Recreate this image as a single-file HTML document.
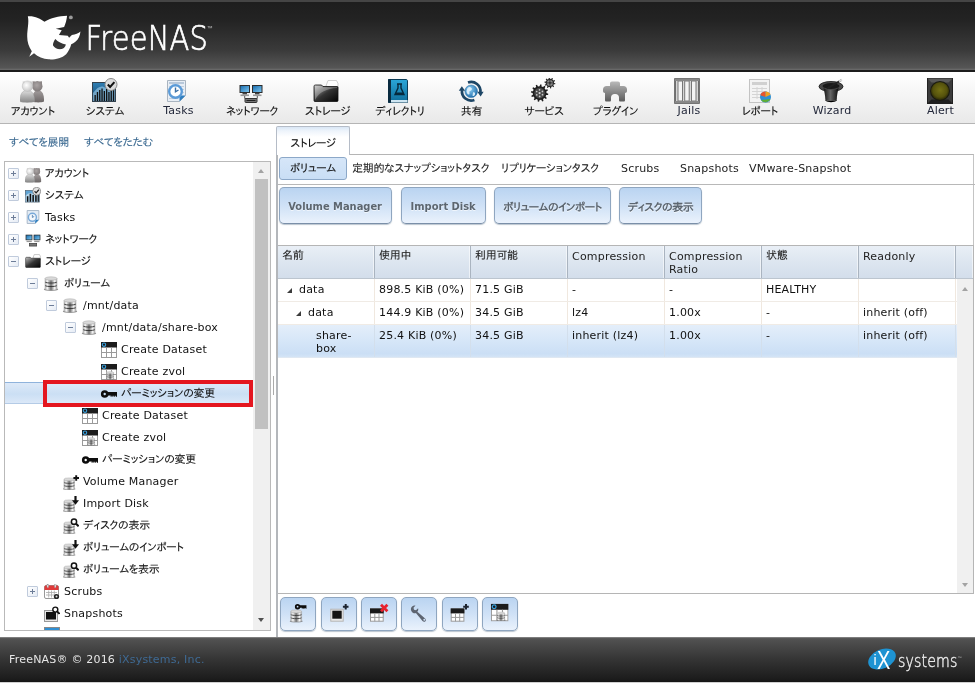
<!DOCTYPE html>
<html lang="ja">
<head>
<meta charset="utf-8">
<title>FreeNAS</title>
<style>
*{box-sizing:border-box;margin:0;padding:0}
html,body{width:975px;height:683px;overflow:hidden;background:#fff}
body{position:relative;font-family:"DejaVu Sans","Liberation Sans","IPAPGothic","IPAGothic","Noto Sans CJK JP",sans-serif;font-size:11px;color:#111;letter-spacing:.2px}
.j{font-family:"Liberation Sans","IPAPGothic","IPAGothic","Noto Sans CJK JP",sans-serif;font-size:11px;letter-spacing:-0.3px;-webkit-text-stroke:.1px currentColor}
.abs{position:absolute}
#header{position:absolute;left:0;top:0;width:975px;height:71.500px;background:linear-gradient(#454545 0,#454545 1.500px,#1e1e1e 2.500px,#232323 20px,#3a3a3a 50px,#565656 68px,#686868 69.500px,#1c1c1c 70px,#1c1c1c 71.500px)}
#menubar{position:absolute;left:0;top:71.500px;width:975px;height:52.500px;background:linear-gradient(#ffffff,#f6f6f6 40%,#e9e9e9);border-bottom:1px solid #b5b5b5}
.mi{position:absolute;top:0;height:51px;width:90px;text-align:center}
.mi .ic{position:absolute;left:50%;top:6.500px;width:26px;height:26px;margin-left:-13px}
.mi .lb{position:absolute;left:0;right:0;top:32.500px;line-height:14px;white-space:nowrap;color:#111}
#footer{position:absolute;left:0;top:637px;width:975px;height:46px;background:linear-gradient(#a0a0a0 0,#5a5a5a 1px,#505050 3px,#353535 22px,#1c1c1c 42px,#141414 45px,#d0d0d0 45.5px)}
#footer .cp{position:absolute;left:9px;top:16px;color:#e6e6e6;font-size:11px;line-height:14px;white-space:nowrap}
#footer .cp a{color:#3f6a94;text-decoration:none}

#left{position:absolute;left:0;top:124px;width:276px;height:513px;background:#fff}
.lnk{position:absolute;top:11px;line-height:14px;color:#3d6b92;white-space:nowrap}
#tree{position:absolute;left:4px;top:37px;width:267px;height:470px;border:1px solid #b9b9b9;overflow:hidden;background:#fff}
.tr{position:absolute;left:0;width:249px;height:22px}
.tr.sel{background:linear-gradient(#dde9f8,#cbdff4 55%,#dbe8f8);border-top:1px solid #8fb3dc;border-bottom:1px solid #b4cbe6}
.tr.sel>*{margin-top:-1px}
.ex{position:absolute;margin-left:-1px;width:11px;height:11px;border:1px solid #c0cbdc;background:linear-gradient(135deg,#fff,#e6ecf5);border-radius:1px}
.ex .h{position:absolute;left:2px;top:4px;width:5px;height:1px;background:#6d7d98}
.ex .v{position:absolute;left:4px;top:2px;width:1px;height:5px;background:#6d7d98}
.ti{position:absolute}
.tx{position:absolute;top:5px;line-height:14px;white-space:nowrap;color:#111}
#tsb{position:absolute;left:248px;top:0;width:17px;height:468px;background:#f0f0f0}
#tsb .th{position:absolute;left:2px;top:17px;width:13px;height:250px;background:#c1c1c1}
#tsb .up{position:absolute;left:5px;top:7px;border:3.500px solid transparent;border-top:0;border-bottom:4px solid #a3a3a3}
#tsb .dn{position:absolute;left:5px;top:456px;border:3.500px solid transparent;border-bottom:0;border-top:4px solid #505050}
#redbox{position:absolute;left:43px;top:256px;width:210px;height:27px;border:4px solid #e4161f}

#split{position:absolute;left:271px;top:124px;width:5px;height:513px;background:#fff}
#right{position:absolute;left:276px;top:124px;width:699px;height:513px}
#tab{position:absolute;left:0;top:2px;width:74px;height:29px;border:1px solid #b5bcc7;border-bottom:0;background:linear-gradient(#d9e6f5,#eef4fb 4px,#fff 10px);z-index:2;text-align:center;line-height:14px;padding-top:9px;border-radius:2px 2px 0 0}
#pane{position:absolute;left:0;top:30px;width:698px;height:483px;border:1px solid #b5b5b5;border-left:2px solid #b4b7bb;border-right:1px solid #c4c4c4;border-bottom:0;background:#fff}
#subsel{position:absolute;left:3px;top:33px;width:68px;height:23px;border:1px solid #8ca8c8;border-radius:3px;background:linear-gradient(#d6e6f8,#c9def5);text-align:center;line-height:14px;padding-top:3px;z-index:3}
.st{position:absolute;top:38px;line-height:14px;white-space:nowrap;color:#222;z-index:3}
#sep1{position:absolute;left:2px;top:60px;width:697px;height:1px;background:#b8b8b8;z-index:3}
.btn{position:absolute;top:63px;height:37px;border:1px solid #8fa6c0;border-bottom-color:#7a8fa8;border-radius:5px;background:linear-gradient(#bad4f1,#cfe1f6 50%,#eaf2fc);z-index:3;text-align:center;font-weight:bold;color:#5c6670;line-height:14px;padding-top:12px;white-space:nowrap;box-shadow:0 1px 1px rgba(120,140,160,.5);text-shadow:0 1px 0 rgba(255,255,255,.6)}
.btn span{display:inline-block;letter-spacing:0;transform:scaleX(.9)}
.btn span.jb{transform:none;letter-spacing:-.5px}
.jb{font-family:"Liberation Sans","IPAPGothic","IPAGothic","Noto Sans CJK JP",sans-serif;letter-spacing:-.4px;font-weight:bold}
#grid{position:absolute;left:2px;top:121px;width:696px;height:349px;border:1px solid #b5b5b5;border-left:0;z-index:3;background:#fff;overflow:hidden}
#ghead{position:absolute;left:0;top:0;width:696px;height:33px;background:linear-gradient(#e9eff6,#dde6f0 50%,#d3deeb);border-bottom:1px solid #bcc5cf}
.hc{position:absolute;top:0;height:32px;padding:4px 0 0 4px;line-height:13px;border-right:1px solid #aab4c0;box-shadow:inset -1px 0 0 rgba(255,255,255,.55);color:#222;white-space:nowrap}
.gr{position:absolute;left:0;width:679px;border-bottom:1px solid #f0ebe5;background:#fff}
.gsel{background:linear-gradient(#e4eefa,#d6e6f8 50%,#cbdff5 90%,#d4e4f6);border-bottom-color:#dfe8f2}
.gsel .gc{border-right-color:#d3dfec}
.hc.j{padding-top:3px}
.st.j{top:36.500px}
.gc{position:absolute;top:0;bottom:0;padding:4px 0 0 4px;line-height:13px;border-right:1px solid #f0e8df;white-space:nowrap;color:#111}
.arr{position:absolute;top:9px;width:0;height:0;border-left:5px solid transparent;border-bottom:5px solid #3c3c3c}
#gsb{position:absolute;left:679px;top:33px;width:18px;height:315px;background:#f0f0f0}
#gsb .up{position:absolute;left:5px;top:8px;border:3.500px solid transparent;border-top:0;border-bottom:4px solid #a3a3a3}
#gsb .dn{position:absolute;left:5px;top:304px;border:3.500px solid transparent;border-bottom:0;border-top:4px solid #a3a3a3}
#tb{position:absolute;left:2px;top:470px;width:697px;height:43px;background:#fff;z-index:3}
.ib{position:absolute;top:3px;width:36px;height:34px;border:1px solid #8fa6c0;border-radius:5px;background:linear-gradient(#bad4f1,#cfe1f6 50%,#eaf2fc);box-shadow:0 1px 1px rgba(120,140,160,.5)}
.ib svg{position:absolute;left:7px;top:5px}
#grip{position:absolute;left:273px;top:376px;width:1px;height:19px;background:#aaa}
#app{position:absolute;left:0;top:0;width:975px;height:683px;will-change:transform}
.tx.j{top:4px}
</style>
</head>
<body>
<div id="app">
<svg width="0" height="0" style="position:absolute">
<defs>
<linearGradient id="gGray" x1="0" y1="0" x2="0" y2="1"><stop offset="0" stop-color="#e4e4e4"/><stop offset="1" stop-color="#7d7d7d"/></linearGradient>
<linearGradient id="gGray2" x1="0" y1="0" x2="0" y2="1"><stop offset="0" stop-color="#c9c9c9"/><stop offset="1" stop-color="#6a6a6a"/></linearGradient>
<linearGradient id="gBlue" x1="0" y1="0" x2="0" y2="1"><stop offset="0" stop-color="#2f7fb4"/><stop offset="1" stop-color="#15456b"/></linearGradient>
<linearGradient id="gScreen" x1="0" y1="0" x2="1" y2="1"><stop offset="0" stop-color="#1b6fb0"/><stop offset="1" stop-color="#7cc4ee"/></linearGradient>
<linearGradient id="gFolder" x1="0" y1="0" x2="1" y2="1"><stop offset="0" stop-color="#c4c4c4"/><stop offset="0.5" stop-color="#333"/><stop offset="1" stop-color="#030303"/></linearGradient>
<linearGradient id="gBook" x1="0" y1="0" x2="0" y2="1"><stop offset="0" stop-color="#2aa6d8"/><stop offset="1" stop-color="#0f6c99"/></linearGradient>
<linearGradient id="gPlug" x1="0" y1="0" x2="0" y2="1"><stop offset="0" stop-color="#b9b9b9"/><stop offset="1" stop-color="#5c5c5c"/></linearGradient>
<radialGradient id="gAlert" cx="0.5" cy="0.45" r="0.55"><stop offset="0" stop-color="#747014"/><stop offset="0.7" stop-color="#55520c"/><stop offset="1" stop-color="#2a2807"/></radialGradient>
<radialGradient id="gGlobe" cx="0.4" cy="0.35" r="0.7"><stop offset="0" stop-color="#8fd0f5"/><stop offset="1" stop-color="#1b6aa8"/></radialGradient>
<linearGradient id="gHat" x1="0" y1="0" x2="1" y2="0"><stop offset="0" stop-color="#111"/><stop offset="0.45" stop-color="#666"/><stop offset="1" stop-color="#0a0a0a"/></linearGradient>
<linearGradient id="gBtn" x1="0" y1="0" x2="0" y2="1"><stop offset="0" stop-color="#e6f0fb"/><stop offset="1" stop-color="#bcd5f0"/></linearGradient>
</defs></svg>
<div id="header">
<svg class="abs" style="left:20px;top:8px" width="90" height="60" viewBox="0 0 975 650">
<path fill="#fff" d="M85,90 C160,85 220,115 265,150 C330,110 420,88 510,85 C505,130 495,170 478,205 L388,226 L452,240 C440,258 430,275 422,292 L518,300 L532,322 L562,292 C600,290 635,275 655,255 C650,300 635,340 600,365 C585,378 570,385 555,392 C545,430 525,470 500,500 C450,545 380,560 310,556 C250,552 195,530 152,490 L100,528 L128,468 C95,420 78,370 78,310 C78,230 100,160 85,90 Z M382,335 C365,360 355,385 358,405 C375,435 410,450 450,445 C475,440 490,420 497,395 C455,385 410,365 382,335 Z" fill-rule="evenodd"/>
<circle cx="551" cy="102" r="21" fill="#9a9a9a"/>
</svg>
<svg class="abs" style="left:80px;top:10px" width="140" height="50" viewBox="0 0 140 50">
<text x="5.5" y="39.5" font-family="'DejaVu Sans','Liberation Sans',sans-serif" font-weight="200" font-size="34.5" fill="#fff" stroke="#fff" stroke-width="0.7" textLength="122.5" lengthAdjust="spacingAndGlyphs">FreeNAS</text>
<text x="126.5" y="19.5" font-family="'Liberation Sans',sans-serif" font-size="6" fill="#bbb">™</text>
</svg>
</div>
<div id="menubar">
<div class="mi" style="left:-12px"><svg class="ic" viewBox="0 0 26 26"><use href="#s-acct" width="26" height="26"/></svg><div class="lb j">アカウント</div></div>
<div class="mi" style="left:60px"><svg class="ic" viewBox="0 0 26 26"><rect x="0.500" y="4.500" width="23" height="19" fill="url(#gBlue)" stroke="#33424f"/><path d="M1 15 C6 8 10 7 14 10 S20 9 23 6 V23 H1z" fill="#a9d3ee" opacity=".6"/><g fill="#111"><rect x="2.500" y="17" width="1.300" height="6"/><rect x="4.800" y="14" width="1.300" height="9"/><rect x="7.100" y="12" width="1.300" height="11"/><rect x="9.400" y="10.500" width="1.300" height="12.500"/><rect x="11.700" y="13" width="1.300" height="10"/><rect x="14" y="11" width="1.300" height="12"/><rect x="16.300" y="14" width="1.300" height="9"/><rect x="18.600" y="12" width="1.300" height="11"/><rect x="20.900" y="9" width="1.300" height="14"/></g><circle cx="19" cy="6.500" r="6" fill="#dcdcdc" stroke="#8a8a8a"/><path d="M15.800 6.500l2.300 2.500 4.300-4.800" fill="none" stroke="#111" stroke-width="2"/></svg><div class="lb j">システム</div></div>
<div class="mi" style="left:132px"><svg class="ic" viewBox="0 0 26 26"><path d="M3.500 2.500h18v15l-6 6h-12z" fill="#e8eef5" stroke="#a9b4c0"/><rect x="5" y="4" width="15" height="2" fill="#b8c8da"/><g stroke="#c2cfdd" stroke-width="1"><path d="M5 8.500h15M5 11.500h15M5 14.500h15M5 17.500h12M5 20.500h9"/></g><path d="M21.500 17.500l-6 6v-6z" fill="#2f7fc0"/><circle cx="11.500" cy="13.500" r="6.300" fill="#fff" stroke="#5b9bd8" stroke-width="2.400"/><path d="M11.500 9.500v4.300l3-1.800" fill="none" stroke="#3a6fa4" stroke-width="1.400"/></svg><div class="lb" style="color:#23283a;left:3px">Tasks</div></div>
<div class="mi" style="left:206px"><svg class="ic" viewBox="0 0 26 26"><g><rect x="1.500" y="7" width="10.500" height="8" fill="#2c2c2c"/><rect x="2.500" y="8" width="8.500" height="6" fill="url(#gScreen)"/><rect x="4.500" y="15" width="4.500" height="1.500" fill="#444"/><rect x="2.500" y="16.500" width="8.500" height="1.600" fill="#999"/><rect x="14" y="7" width="10.500" height="8" fill="#2c2c2c"/><rect x="15" y="8" width="8.500" height="6" fill="url(#gScreen)"/><rect x="17" y="15" width="4.500" height="1.500" fill="#444"/><rect x="15" y="16.500" width="8.500" height="1.600" fill="#999"/><path d="M6.700 18v2.500h12.600v-2.500" fill="none" stroke="#555" stroke-width="1"/><rect x="7" y="20.500" width="12" height="4" rx="0.800" fill="#777" stroke="#333"/><rect x="8.500" y="22" width="9" height="1" fill="#222"/></g></svg><div class="lb j" style="left:2px">ネットワーク</div></div>
<div class="mi" style="left:281px"><svg class="ic" viewBox="0 0 26 26"><path d="M13 8l2-5.500h8.500l1.500 3v6z" fill="#fdfdfd" stroke="#bbb" stroke-width=".7"/><path d="M1 8.500c0-1 .5-1.500 1.500-1.500h6l1.500 1.500h14c.8 0 1 .5 1 1v13c0 .8-.5 1-1 1h-22c-.7 0-1-.4-1-1z" fill="url(#gFolder)" stroke="#111" stroke-width=".8"/><path d="M2 22c4-8 12-11.500 22-12v-.8h-14.300l-1.500-1.500h-6.200z" fill="#fff" opacity=".28"/></svg><div class="lb j" style="left:3px">ストレージ</div></div>
<div class="mi" style="left:353px"><svg class="ic" viewBox="0 0 26 26"><path d="M3.500 1.500h17.500c1 0 1.500.5 1.500 1.500v21.500h-19z" fill="url(#gBook)" stroke="#0b3c57"/><rect x="3" y="1.500" width="3" height="23" fill="#0a2b40"/><rect x="6" y="22" width="16.500" height="2.500" fill="#cfe6f2"/><path d="M12 6h5M13 6v4l-3 6.500h9l-3-6.500v-4" fill="none" stroke="#06293d" stroke-width="1.400"/><path d="M11.200 14.500h6.600l1 2h-8.600z" fill="#06293d"/></svg><div class="lb j" style="left:4px">ディレクトリ</div></div>
<div class="mi" style="left:426px"><svg class="ic" viewBox="0 0 26 26"><circle cx="13.200" cy="13.300" r="6.300" fill="url(#gGlobe)" stroke="#2b6ea3" stroke-width=".5"/><path d="M9.500 10c1.500-1.500 3-1 4 0s0 2.500-1.500 3 .5 3-1 3.500-2.500-2-2.500-3.500zM15 14.500c1.500-.5 2.500.5 2 2s-2 2-2.500 1z" fill="#e6f5fe" opacity=".9"/><path d="M10 4.560A9.300 9.300 0 0 1 22.400 14.500" fill="none" stroke="#1d4666" stroke-width="2.700"/><path d="M19.300 13.800h6.300l-3 4.600z" fill="#1d4666"/><path d="M16.400 22.040A9.300 9.300 0 0 1 4 12.100" fill="none" stroke="#1d4666" stroke-width="2.700"/><path d="M.8 12.800h6.300l-3.300-4.600z" fill="#1d4666"/></svg><div class="lb j" style="left:1px">共有</div></div>
<div class="mi" style="left:498px"><svg class="ic" viewBox="0 0 26 26"><path d="M16.50 15.10L18.28 15.65L18.09 17.00L16.23 17.03L15.58 18.55L16.85 19.91L16.00 20.99L14.38 20.08L13.05 21.08L13.47 22.89L12.20 23.40L11.25 21.80L9.60 22.00L9.05 23.78L7.70 23.59L7.67 21.73L6.15 21.08L4.79 22.35L3.71 21.50L4.62 19.88L3.62 18.55L1.81 18.97L1.30 17.70L2.90 16.75L2.70 15.10L0.92 14.55L1.11 13.20L2.97 13.17L3.62 11.65L2.35 10.29L3.20 9.21L4.82 10.12L6.15 9.12L5.73 7.31L7.00 6.80L7.95 8.40L9.60 8.20L10.15 6.42L11.50 6.61L11.53 8.47L13.05 9.12L14.41 7.85L15.49 8.70L14.58 10.32L15.58 11.65L17.39 11.23L17.90 12.50L16.30 13.45z" fill="#1f1f1f"/><circle cx="9.600" cy="15.100" r="5.300" fill="#4a4a4a"/><circle cx="12.50" cy="16.68" r=".85" fill="#c9c9c9"/><circle cx="9.68" cy="18.40" r=".85" fill="#c9c9c9"/><circle cx="6.78" cy="16.82" r=".85" fill="#c9c9c9"/><circle cx="6.70" cy="13.52" r=".85" fill="#c9c9c9"/><circle cx="9.52" cy="11.80" r=".85" fill="#c9c9c9"/><circle cx="12.42" cy="13.38" r=".85" fill="#c9c9c9"/><circle cx="9.600" cy="15.100" r="1.100" fill="#d8d8d8"/><path d="M24.10 4.90L25.38 5.31L25.21 6.33L23.86 6.30L23.30 7.37L24.09 8.46L23.35 9.18L22.28 8.36L21.20 8.89L21.20 10.24L20.18 10.39L19.79 9.10L18.60 8.89L17.81 9.99L16.89 9.51L17.35 8.23L16.50 7.37L15.22 7.79L14.76 6.86L15.87 6.10L15.70 4.90L14.42 4.49L14.59 3.47L15.94 3.50L16.50 2.43L15.71 1.34L16.45 0.62L17.52 1.44L18.60 0.91L18.60 -0.44L19.62 -0.59L20.01 0.70L21.20 0.91L21.99 -0.19L22.91 0.29L22.45 1.57L23.30 2.43L24.58 2.01L25.04 2.94L23.93 3.70z" fill="#2a2a2a"/><circle cx="19.900" cy="4.900" r="3" fill="#8c8c8c"/><path d="M19.900 2v5.800M17 4.900h5.800" stroke="#2a2a2a" stroke-width=".9"/><circle cx="19.900" cy="4.900" r=".8" fill="#2a2a2a"/></svg><div class="lb j" style="left:2px">サービス</div></div>
<div class="mi" style="left:570px"><svg class="ic" viewBox="0 0 26 26"><path d="M8 5.500c0-1.200.8-2 2-2h6c1.200 0 2 .8 2 2v2.500h3.500c2 0 3.500 1.500 3.500 3.500v1.500c0 1.200-.8 2-2 2v7c0 1-.5 1.500-1.500 1.500h-3c-1 0-1.500-.5-1.500-1.500v-2.500c0-2-1.500-3.500-3.500-3.500h-1c-2 0-3.500 1.500-3.500 3.500v2.500c0 1-.5 1.500-1.500 1.500h-3c-1 0-1.500-.5-1.500-1.500v-7c-1.200 0-2-.8-2-2v-1.500c0-2 1.500-3.500 3.500-3.500h3.500z" fill="url(#gPlug)"/></svg><div class="lb j" style="left:1px">プラグイン</div></div>
<div class="mi" style="left:642px"><svg class="ic" viewBox="0 0 26 26"><rect x="1" y="1" width="24" height="24" fill="#d6d6d6" stroke="#555" stroke-width="1.600"/><g fill="#f4f4f4" stroke="#777" stroke-width="1"><rect x="4" y="3" width="4.500" height="20"/><rect x="10.700" y="3" width="4.500" height="20"/><rect x="17.500" y="3" width="4.500" height="20"/></g><rect x="1" y="1" width="24" height="2" fill="#888"/><rect x="1" y="23" width="24" height="2" fill="#888"/></svg><div class="lb" style="color:#23283a;left:4px">Jails</div></div>
<div class="mi" style="left:715px"><svg class="ic" viewBox="0 0 26 26"><rect x="2.500" y="1.500" width="20" height="23" fill="#f3f3f3" stroke="#c3c3c3"/><rect x="5" y="4" width="15" height="3" fill="#d0d0d0"/><g stroke="#d4d4d4" stroke-width="1"><path d="M5 10.500h15M5 13.500h15M5 16.500h15M5 19.500h15M10 9v12M15 9v12"/></g><circle cx="18.500" cy="19" r="5.500" fill="#2f8fd3"/><path d="M18.500 19l-5.200-1.800a5.500 5.500 0 0 1 5.200-3.700z" fill="#e8542b"/><path d="M18.500 19v-5.500a5.500 5.500 0 0 1 5 3.200z" fill="#f2a11f"/><path d="M14 22a5.500 5.500 0 0 0 9.500-1z" fill="#5fae36"/></svg><div class="lb j">レポート</div></div>
<div class="mi" style="left:786px"><svg class="ic" viewBox="0 0 26 26"><ellipse cx="13" cy="8.500" rx="12" ry="5" fill="#4a4a4a" stroke="#111" stroke-width=".8"/><ellipse cx="13" cy="8" rx="8.500" ry="3" fill="#1a1a1a"/><path d="M5.500 10c1 4 1.800 8 1.800 11.500 2 2 9.500 2 11.500 0 0-3.500.8-7.500 1.800-11.500-3 2.500-12 2.500-15.100 0z" fill="url(#gHat)"/><path d="M7.300 21.500c2 2 9.500 2 11.500 0v1c-2 2.200-9.500 2.200-11.500 0z" fill="#000"/><path d="M9 10.500L23.500 2" stroke="#222" stroke-width="2"/><path d="M21 3.500l3-1.800" stroke="#ddd" stroke-width="2"/></svg><div class="lb" style="color:#23283a;left:2px">Wizard</div></div>
<div class="mi" style="left:895px"><svg class="ic" viewBox="0 0 26 26"><rect x=".5" y=".5" width="25" height="25" fill="#3b3b3b" stroke="#222"/><path d="M.5 .5h25l-4 4h-17z" fill="#5a5a5a"/><path d="M.5 25.500h25l-4-4h-17z" fill="#1f1f1f"/><circle cx="13" cy="13" r="10" fill="#1a1a10"/><circle cx="13" cy="13" r="9" fill="url(#gAlert)"/></svg><div class="lb" style="color:#23283a;left:1px">Alert</div></div>
</div>
<svg width="0" height="0" style="position:absolute"><defs>
<linearGradient id="gCyl" x1="0" y1="0" x2="1" y2="0"><stop offset="0" stop-color="#b4b4b4"/><stop offset="0.2" stop-color="#f6f6f6"/><stop offset="0.5" stop-color="#6f6f6f"/><stop offset="0.8" stop-color="#f6f6f6"/><stop offset="1" stop-color="#acacac"/></linearGradient>
<symbol id="s-db" viewBox="0 0 16 16"><ellipse cx="8" cy="14.400" rx="7.200" ry="1.500" fill="#6e6e6e" opacity=".75"/><path d="M2 3.500v10.300c0 1.600 12 1.600 12 0v-10.300z" fill="url(#gCyl)"/><path d="M2 7c1.500 1.400 10.500 1.400 12 0M2 10.500c1.500 1.400 10.500 1.400 12 0" stroke="#2e2e2e" stroke-width=".9" fill="none"/><path d="M2 3.500v10.300M14 3.500v10.300" stroke="#a0a0a0" stroke-width=".5"/><ellipse cx="8" cy="3.500" rx="6" ry="1.700" fill="#d9d9d9" stroke="#a6a6a6" stroke-width=".5"/></symbol>
<symbol id="s-dbs" viewBox="0 0 16 16"><g transform="translate(-.8 2.300) scale(.875)"><use href="#s-db" width="16" height="16"/></g></symbol>
<symbol id="s-tbl" viewBox="0 0 16 16"><rect x=".5" y=".5" width="15" height="15" fill="#fff" stroke="#9a9a9a"/><rect x="0" y="0" width="16" height="5.500" fill="#1c1c1c"/><circle cx="3" cy="2.700" r="1.700" fill="#1c1c1c" stroke="#39a0dc" stroke-width="1.100"/><path d="M.5 10.500h15M5.500 5.500v10M10.500 5.500v10" stroke="#9a9a9a" fill="none"/></symbol>
<symbol id="s-zvol" viewBox="0 0 16 16"><use href="#s-tbl" width="16" height="16"/><g transform="translate(4.500 6.500) scale(.58)"><use href="#s-db" width="16" height="16"/></g></symbol>
<symbol id="s-key" viewBox="0 0 20 16"><path fill="#0d0d0d" fill-rule="evenodd" d="M4.700 5.200a3.800 3.800 0 1 0 0 7.600a3.800 3.800 0 0 0 0-7.600zM4.700 7.800a1.200 1.200 0 1 1 0 2.400a1.200 1.200 0 0 1 0-2.400z"/><path fill="#0d0d0d" d="M7.500 7h9.500v4.800h-1v-1h-.8v1h-1v-1h-.8v1h-1v-1h-.8v1h-1v-1.300h-3.100z"/></symbol>
<radialGradient id="gHeadL" cx=".4" cy=".4" r=".7"><stop offset="0" stop-color="#fff"/><stop offset="1" stop-color="#bdbdbd"/></radialGradient>
<radialGradient id="gHeadR" cx=".45" cy=".4" r=".7"><stop offset="0" stop-color="#aaa4a4"/><stop offset="1" stop-color="#7a7474"/></radialGradient>
<linearGradient id="gBodL" x1="0" y1="0" x2="0" y2="1"><stop offset="0" stop-color="#dedede"/><stop offset="1" stop-color="#858585"/></linearGradient>
<linearGradient id="gBodR" x1="0" y1="0" x2="0" y2="1"><stop offset="0" stop-color="#a39d9d"/><stop offset="1" stop-color="#6b6666"/></linearGradient>
<symbol id="s-acct" viewBox="0 0 26 26"><path d="M12.500 23.600c-.3-7 1.200-11.300 5.500-11.300s6.300 4.300 6 11.300c-3 1.200-8.500 1.200-11.500 0z" fill="url(#gBodR)"/><path d="M12.500 3.200l2.500.3v3h-2.500zM22 3.200l-2.500.3v3h2.500z" fill="#8d8787"/><circle cx="17.300" cy="8.200" r="5.200" fill="url(#gHeadR)"/><path d="M0 23.600c-.3-7 2-11.300 7.200-11.300s7.600 4.300 7.300 11.300c-3 1.200-11.600 1.200-14.500 0z" fill="url(#gBodL)" stroke="#9a9a9a" stroke-width=".4"/><path d="M2.700 3.200l2.500.3v3h-2.500zM12.300 3.200l-2.500.3v3h2.500z" fill="#d6d6d6"/><circle cx="7.500" cy="8.200" r="5.300" fill="url(#gHeadL)" stroke="#b0b0b0" stroke-width=".4"/></symbol>
</defs></svg>
<div id="left">
<div class="lnk j" style="left:9px">すべてを展開</div><div class="lnk j" style="left:84px">すべてをたたむ</div>
<div id="tree">
<div class="tr" style="top:0px"><span class="ex" style="left:4px;top:6px"><i class="h"></i><i class="v"></i></span><svg class="ti" style="left:20px;top:4px" width="18" height="18"><use href="#s-acct" width="17.500" height="17.500"/></svg><span class="tx j" style="left:40px">アカウント</span></div>
<div class="tr" style="top:22px"><span class="ex" style="left:4px;top:6px"><i class="h"></i><i class="v"></i></span><svg class="ti" style="left:20px;top:3px" width="16" height="16" viewBox="0 0 26 26"><rect x=".5" y="5.500" width="23" height="19" fill="#5fa3d3" stroke="#4a5a68"/><path d="M1 14c5-5 9-5 12-3s7 0 10-3v16h-22z" fill="#d6e8f5" opacity=".7"/><g fill="#111"><rect x="3" y="15" width="2.500" height="9"/><rect x="7.500" y="11" width="2.500" height="13"/><rect x="12" y="13" width="2.500" height="11"/><rect x="16.500" y="12" width="2.500" height="12"/><rect x="20.500" y="10" width="2" height="14"/></g><circle cx="19" cy="7" r="6.500" fill="#e4e4e4" stroke="#777" stroke-width="1.200"/><path d="M15.500 7l2.500 2.500 4.500-5" fill="none" stroke="#222" stroke-width="2"/></svg><span class="tx j" style="left:40px">システム</span></div>
<div class="tr" style="top:44px"><span class="ex" style="left:4px;top:6px"><i class="h"></i><i class="v"></i></span><svg class="ti" style="left:20px;top:3px" width="16" height="16" viewBox="0 0 26 26"><path d="M3.500 2.500h19v15l-6 6h-13z" fill="#e4ecf5" stroke="#9fb0c3" stroke-width="1.400"/><path d="M22.500 17.500l-6 6v-6z" fill="#2f7fc0"/><circle cx="12" cy="13.500" r="6.500" fill="#f4f8fc" stroke="#79a9d8" stroke-width="2.400"/><path d="M12 9.500v4.300l3-1.800" fill="none" stroke="#5a86b4" stroke-width="1.500"/></svg><span class="tx" style="left:40px">Tasks</span></div>
<div class="tr" style="top:66px"><span class="ex" style="left:4px;top:6px"><i class="h"></i><i class="v"></i></span><svg class="ti" style="left:20px;top:3px" width="16" height="16" viewBox="0 0 26 26"><rect x="1" y="6" width="11" height="9" fill="#2c2c2c"/><rect x="2.200" y="7.200" width="8.600" height="6.600" fill="url(#gScreen)"/><rect x="14" y="6" width="11" height="9" fill="#2c2c2c"/><rect x="15.200" y="7.200" width="8.600" height="6.600" fill="url(#gScreen)"/><rect x="2.500" y="16" width="8.500" height="2" fill="#999"/><rect x="15" y="16" width="8.500" height="2" fill="#999"/><rect x="7" y="20" width="12" height="4.500" fill="#777" stroke="#333"/></svg><span class="tx j" style="left:40px">ネットワーク</span></div>
<div class="tr" style="top:88px"><span class="ex" style="left:4px;top:6px"><i class="h"></i></span><svg class="ti" style="left:20px;top:3px" width="16" height="16" viewBox="0 0 26 26"><path d="M13 8l2-5.500h8.500l1.500 3v6z" fill="#fdfdfd" stroke="#aaa" stroke-width="1"/><path d="M1 8.500c0-1 .5-1.500 1.500-1.500h6l1.500 1.500h14c.8 0 1 .5 1 1v13c0 .8-.5 1-1 1h-22c-.7 0-1-.4-1-1z" fill="url(#gFolder)" stroke="#111" stroke-width=".8"/></svg><span class="tx j" style="left:40px">ストレージ</span></div>
<div class="tr" style="top:110px"><span class="ex" style="left:23px;top:6px"><i class="h"></i></span><svg class="ti" style="left:38px;top:3px" width="16" height="16"><use href="#s-db" width="16" height="16"/></svg><span class="tx j" style="left:59px">ボリューム</span></div>
<div class="tr" style="top:132px"><span class="ex" style="left:42px;top:6px"><i class="h"></i></span><svg class="ti" style="left:57px;top:3px" width="16" height="16"><use href="#s-db" width="16" height="16"/></svg><span class="tx" style="left:78px">/mnt/data</span></div>
<div class="tr" style="top:154px"><span class="ex" style="left:61px;top:6px"><i class="h"></i></span><svg class="ti" style="left:76px;top:3px" width="16" height="16"><use href="#s-db" width="16" height="16"/></svg><span class="tx" style="left:97px">/mnt/data/share-box</span></div>
<div class="tr" style="top:176px"><svg class="ti" style="left:96px;top:4px" width="16" height="16"><use href="#s-tbl" width="16" height="16"/></svg><span class="tx" style="left:116px">Create Dataset</span></div>
<div class="tr" style="top:198px"><svg class="ti" style="left:96px;top:4px" width="16" height="16"><use href="#s-zvol" width="16" height="16"/></svg><span class="tx" style="left:116px">Create zvol</span></div>
<div class="tr sel" style="top:220px"><svg class="ti" style="left:95px;top:3px" width="20" height="16"><use href="#s-key" width="20" height="16"/></svg><span class="tx j" style="left:116px">パーミッションの変更</span></div>
<div class="tr" style="top:242px"><svg class="ti" style="left:77px;top:4px" width="16" height="16"><use href="#s-tbl" width="16" height="16"/></svg><span class="tx" style="left:97px">Create Dataset</span></div>
<div class="tr" style="top:264px"><svg class="ti" style="left:77px;top:4px" width="16" height="16"><use href="#s-zvol" width="16" height="16"/></svg><span class="tx" style="left:97px">Create zvol</span></div>
<div class="tr" style="top:286px"><svg class="ti" style="left:76px;top:3px" width="20" height="16"><use href="#s-key" width="20" height="16"/></svg><span class="tx j" style="left:97px">パーミッションの変更</span></div>
<div class="tr" style="top:308px"><svg class="ti" style="left:58px;top:4px" width="16" height="16" viewBox="0 0 16 16"><use href="#s-dbs" width="16" height="16"/><path d="M10.400 4h5.600M13.200 1.200v5.600" stroke="#111" stroke-width="1.900"/></svg><span class="tx" style="left:78px">Volume Manager</span></div>
<div class="tr" style="top:330px"><svg class="ti" style="left:58px;top:4px" width="16" height="16" viewBox="0 0 16 16"><use href="#s-dbs" width="16" height="16"/><path d="M12.500 0v5" stroke="#111" stroke-width="2.200"/><path d="M9 4.300h7l-3.500 4.400z" fill="#111"/></svg><span class="tx" style="left:78px">Import Disk</span></div>
<div class="tr" style="top:352px"><svg class="ti" style="left:58px;top:4px" width="16" height="16" viewBox="0 0 16 16"><use href="#s-dbs" width="16" height="16"/><circle cx="11" cy="3.700" r="2.600" fill="#fff" stroke="#111" stroke-width="1.500"/><path d="M13 5.700l2.600 2.600" stroke="#111" stroke-width="2"/></svg><span class="tx j" style="left:78px">ディスクの表示</span></div>
<div class="tr" style="top:374px"><svg class="ti" style="left:58px;top:4px" width="16" height="16" viewBox="0 0 16 16"><use href="#s-dbs" width="16" height="16"/><path d="M12.500 0v5" stroke="#111" stroke-width="2.200"/><path d="M9 4.300h7l-3.500 4.400z" fill="#111"/></svg><span class="tx j" style="left:78px">ボリュームのインポート</span></div>
<div class="tr" style="top:396px"><svg class="ti" style="left:58px;top:4px" width="16" height="16" viewBox="0 0 16 16"><use href="#s-dbs" width="16" height="16"/><circle cx="11" cy="3.700" r="2.600" fill="#fff" stroke="#111" stroke-width="1.500"/><path d="M13 5.700l2.600 2.600" stroke="#111" stroke-width="2"/></svg><span class="tx j" style="left:78px">ボリュームを表示</span></div>
<div class="tr" style="top:418px"><span class="ex" style="left:23px;top:6px"><i class="h"></i><i class="v"></i></span><svg class="ti" style="left:39px;top:4px" width="16" height="16" viewBox="0 0 16 16"><rect x=".5" y="1.500" width="14" height="13" rx="1.500" fill="#fff" stroke="#999"/><path d="M.5 3c0-1 .5-1.500 1.500-1.500h11c1 0 1.500.5 1.500 1.500v3h-14z" fill="#e03a3a"/><rect x="3" y="0" width="1.500" height="3.500" fill="#eee" stroke="#888" stroke-width=".4"/><rect x="10.500" y="0" width="1.500" height="3.500" fill="#eee" stroke="#888" stroke-width=".4"/><path d="M2 8.500h11M2 11h11M4.700 6.500v7M7.500 6.500v7M10.300 6.500v7" stroke="#aaa" stroke-width=".8"/><circle cx="12.500" cy="12.500" r="2.600" fill="#222"/><circle cx="12.500" cy="12.500" r="1" fill="#ddd"/></svg><span class="tx" style="left:59px">Scrubs</span></div>
<div class="tr" style="top:440px"><svg class="ti" style="left:39px;top:4px" width="16" height="16" viewBox="0 0 16 16"><rect x=".5" y="4.500" width="13" height="11" fill="#e8e8e8" stroke="#999"/><rect x="2" y="6" width="10" height="7.500" fill="#111"/><circle cx="11.300" cy="3.600" r="2.500" fill="#fff" stroke="#111" stroke-width="1.400"/><path d="M13.200 5.500l2.300 2.300" stroke="#111" stroke-width="1.800"/></svg><span class="tx" style="left:59px">Snapshots</span></div>
<div class="tr" style="top:462px"><svg class="ti" style="left:39px;top:3px" width="16" height="16" viewBox="0 0 16 16"><rect x=".5" y=".5" width="15" height="15" fill="#2f8fd3" stroke="#888"/></svg></div>
<div id="tsb"><span class="up"></span><span class="th"></span><span class="dn"></span></div>
</div>
<div id="redbox"></div>
</div>
<div id="right">
<div id="tab"><span class="j">ストレージ</span></div>
<div id="pane"></div>
<div id="subsel"><span class="j">ボリューム</span></div>
<div class="st j" style="left:76px">定期的なスナップショットタスク</div>
<div class="st j" style="left:225px">リプリケーションタスク</div>
<div class="st" style="left:345px">Scrubs</div>
<div class="st" style="left:404px">Snapshots</div>
<div class="st" style="left:473px">VMware-Snapshot</div>
<div id="sep1"></div>
<div class="btn" style="left:3px;width:113px"><span>Volume Manager</span></div>
<div class="btn" style="left:125px;width:85px"><span>Import Disk</span></div>
<div class="btn" style="left:218px;width:117px"><span class="jb">ボリュームのインポート</span></div>
<div class="btn" style="left:343px;width:83px"><span class="jb">ディスクの表示</span></div>
<div id="grid">
<div id="ghead"><div class="hc j" style="left:0px;width:97px">名前</div><div class="hc j" style="left:97px;width:96px">使用中</div><div class="hc j" style="left:193px;width:97px">利用可能</div><div class="hc" style="left:290px;width:97px">Compression</div><div class="hc" style="left:387px;width:97px">Compression<br>Ratio</div><div class="hc j" style="left:484px;width:97px">状態</div><div class="hc" style="left:581px;width:97px">Readonly</div><div class="hc" style="left:678px;width:18px"></div></div>
<div class="gr" style="top:33px;height:23px"><div class="gc" style="left:0px;width:97px;padding-left:21px"><i class="arr" style="left:9px"></i>data</div><div class="gc" style="left:97px;width:96px">898.5 KiB (0%)</div><div class="gc" style="left:193px;width:97px">71.5 GiB</div><div class="gc" style="left:290px;width:97px">-</div><div class="gc" style="left:387px;width:97px">-</div><div class="gc" style="left:484px;width:97px">HEALTHY</div><div class="gc" style="left:581px;width:97px"></div></div>
<div class="gr" style="top:56px;height:23px"><div class="gc" style="left:0px;width:97px;padding-left:30px"><i class="arr" style="left:18px"></i>data</div><div class="gc" style="left:97px;width:96px">144.9 KiB (0%)</div><div class="gc" style="left:193px;width:97px">34.5 GiB</div><div class="gc" style="left:290px;width:97px">lz4</div><div class="gc" style="left:387px;width:97px">1.00x</div><div class="gc" style="left:484px;width:97px">-</div><div class="gc" style="left:581px;width:97px">inherit (off)</div></div>
<div class="gr gsel" style="top:79px;height:33px"><div class="gc" style="left:0px;width:97px;padding-left:38px">share-<br>box</div><div class="gc" style="left:97px;width:96px">25.4 KiB (0%)</div><div class="gc" style="left:193px;width:97px">34.5 GiB</div><div class="gc" style="left:290px;width:97px">inherit (lz4)</div><div class="gc" style="left:387px;width:97px">1.00x</div><div class="gc" style="left:484px;width:97px">-</div><div class="gc" style="left:581px;width:97px">inherit (off)</div></div>
<div id="gsb"><span class="up"></span><span class="dn"></span></div>
</div>
<div id="tb"><div class="ib" style="left:2px"><svg width="22" height="20" viewBox="0 0 22 20"><g transform="translate(.2 5.200)"><use href="#s-db" width="16" height="14.500"/></g><g transform="translate(6.200 -2.800) scale(.72)"><use href="#s-key" width="20" height="16"/></g></svg></div><div class="ib" style="left:43px"><svg width="22" height="20" viewBox="0 0 22 20"><rect x="1.800" y="6.200" width="12.400" height="12" fill="#e9e9e9" stroke="#b5b5b5"/><rect x="3.300" y="7.700" width="9.400" height="8" fill="#131313"/><path d="M13.9 3.7h5.600M16.7 0.9v5.600" stroke="#1d2430" stroke-width="2"/></svg></div><div class="ib" style="left:83px"><svg width="22" height="20" viewBox="0 0 22 20"><g transform="translate(1 5.4)"><rect x=".5" y=".5" width="12.700" height="12.300" fill="#fff" stroke="#9a9a9a"/><rect x="0" y="0" width="13.700" height="5" fill="#1a1a1a"/><path d="M.5 9h12.700M4.800 5v8M9 5v8" stroke="#9a9a9a" fill="none"/></g><path d="M12 1.800l6.400 6.400M18.400 1.800l-6.400 6.400" stroke="#e8222e" stroke-width="2.800"/></svg></div><div class="ib" style="left:123px"><svg width="22" height="20" viewBox="0 0 22 20"><path d="M2.500 8.200c-1-1.800-.8-3.600.6-4.800 1-.8 2.200-1.100 3.400-.8l-2 2.200.5 2 2 .5 2.100-2.100c.4 1.300.1 2.600-.8 3.600l7.800 6.600c1 .9 1 2.100.3 2.800-.8.800-2 .7-2.900-.3l-6.600-7.800c-1.500.6-3.300.1-4.400-1.900z" fill="#5d6470"/><circle cx="15.300" cy="16.800" r="1" fill="#cfe0f4"/></svg></div><div class="ib" style="left:164px"><svg width="22" height="20" viewBox="0 0 22 20"><g transform="translate(0.7 5.4)"><rect x=".5" y=".5" width="12.700" height="12.300" fill="#fff" stroke="#9a9a9a"/><rect x="0" y="0" width="13.700" height="5" fill="#1a1a1a"/><path d="M.5 9h12.700M4.800 5v8M9 5v8" stroke="#9a9a9a" fill="none"/></g><path d="M13.2 3.7h5.600M16 0.9v5.600" stroke="#1d2430" stroke-width="2"/></svg></div><div class="ib" style="left:204px"><svg width="22" height="20" viewBox="0 0 22 20"><g transform="translate(.7 .7)"><use href="#s-zvol" width="18" height="17.700"/></g></svg></div></div>
</div>
<div id="footer"><div class="cp">FreeNAS® © 2016 <a>iXsystems, Inc.</a></div>
<svg class="abs" style="left:860px;top:6px" width="110" height="36" viewBox="0 0 110 36">
<ellipse cx="22" cy="16" rx="14.500" ry="9.500" transform="rotate(-24 22 16)" fill="#1e93d2"/>
<text x="13.500" y="22" font-family="'Liberation Sans',sans-serif" font-size="14" fill="#fff">i</text>
<text x="17" y="25.500" font-family="'Liberation Sans',sans-serif" font-size="26" fill="#fff" textLength="13.500" lengthAdjust="spacingAndGlyphs">X</text>
<text x="38" y="24" font-family="'DejaVu Sans','Liberation Sans',sans-serif" font-weight="200" font-size="17" fill="#e8e8e8" stroke="#e8e8e8" stroke-width=".45" textLength="59.500" lengthAdjust="spacingAndGlyphs">systems</text>
<text x="97.500" y="16" font-family="'Liberation Sans',sans-serif" font-size="4" fill="#bbb">™</text>
</svg>
</div>
<div id="grip"></div>
</div>
</body>
</html>
